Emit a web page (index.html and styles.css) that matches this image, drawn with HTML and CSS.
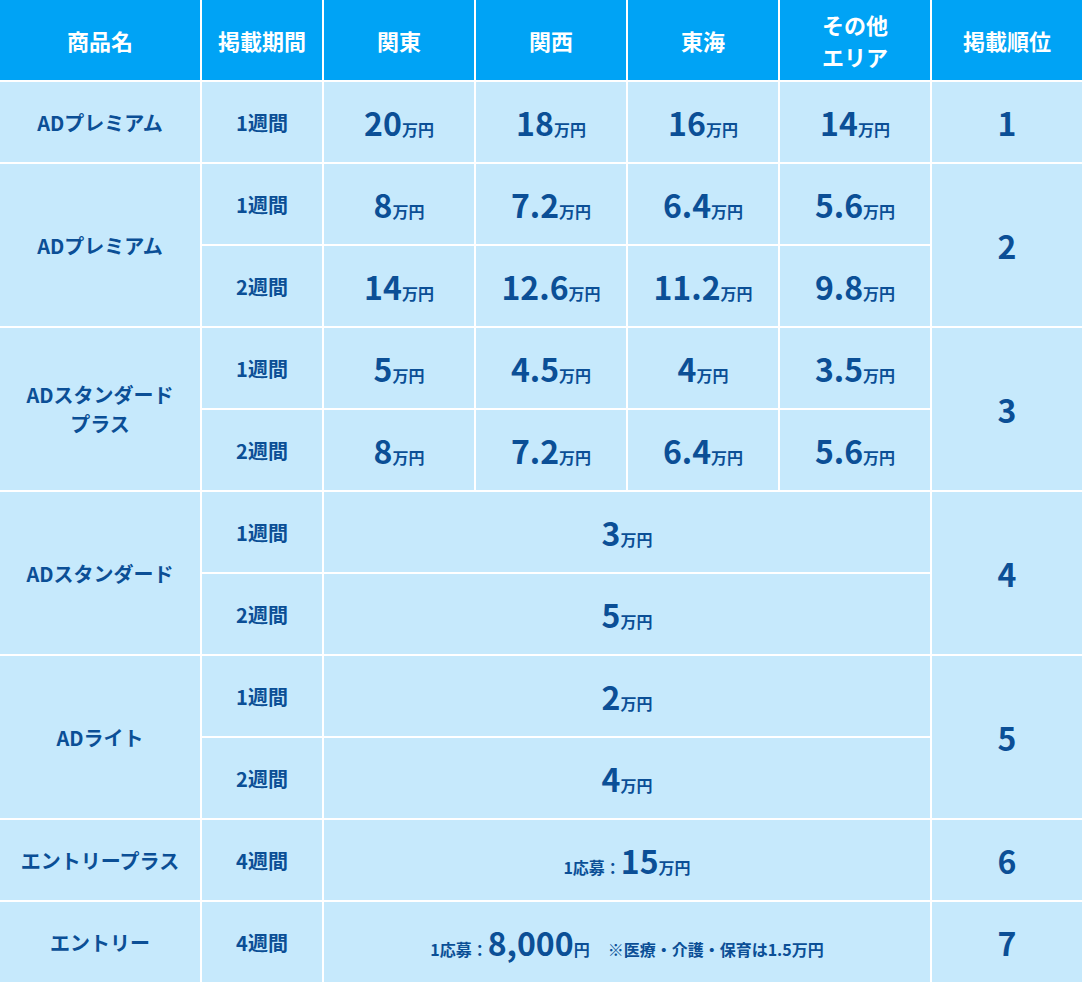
FILE: index.html
```html
<!DOCTYPE html>
<html lang="ja">
<head>
<meta charset="utf-8">
<link rel="stylesheet" href="styles.css">
</head>
<body>
<div class="table">
  <div class="th">商品名</div>
  <div class="th">掲載期間</div>
  <div class="th">関東</div>
  <div class="th">関西</div>
  <div class="th">東海</div>
  <div class="th">その他<br>エリア</div>
  <div class="th">掲載順位</div>

  <div class="td name">ADプレミアム</div>
  <div class="td period">1週間</div>
  <div class="td price"><span class="val"><span class="num">20</span><span class="unit">万円</span></span></div>
  <div class="td price"><span class="val"><span class="num">18</span><span class="unit">万円</span></span></div>
  <div class="td price"><span class="val"><span class="num">16</span><span class="unit">万円</span></span></div>
  <div class="td price"><span class="val"><span class="num">14</span><span class="unit">万円</span></span></div>
  <div class="td rank">1</div>

  <div class="td name span2">ADプレミアム</div>
  <div class="td period">1週間</div>
  <div class="td price"><span class="val"><span class="num">8</span><span class="unit">万円</span></span></div>
  <div class="td price"><span class="val"><span class="num">7.2</span><span class="unit">万円</span></span></div>
  <div class="td price"><span class="val"><span class="num">6.4</span><span class="unit">万円</span></span></div>
  <div class="td price"><span class="val"><span class="num">5.6</span><span class="unit">万円</span></span></div>
  <div class="td rank span2">2</div>
  <div class="td period">2週間</div>
  <div class="td price"><span class="val"><span class="num">14</span><span class="unit">万円</span></span></div>
  <div class="td price"><span class="val"><span class="num">12.6</span><span class="unit">万円</span></span></div>
  <div class="td price"><span class="val"><span class="num">11.2</span><span class="unit">万円</span></span></div>
  <div class="td price"><span class="val"><span class="num">9.8</span><span class="unit">万円</span></span></div>

  <div class="td name span2">ADスタンダード<br>プラス</div>
  <div class="td period">1週間</div>
  <div class="td price"><span class="val"><span class="num">5</span><span class="unit">万円</span></span></div>
  <div class="td price"><span class="val"><span class="num">4.5</span><span class="unit">万円</span></span></div>
  <div class="td price"><span class="val"><span class="num">4</span><span class="unit">万円</span></span></div>
  <div class="td price"><span class="val"><span class="num">3.5</span><span class="unit">万円</span></span></div>
  <div class="td rank span2">3</div>
  <div class="td period">2週間</div>
  <div class="td price"><span class="val"><span class="num">8</span><span class="unit">万円</span></span></div>
  <div class="td price"><span class="val"><span class="num">7.2</span><span class="unit">万円</span></span></div>
  <div class="td price"><span class="val"><span class="num">6.4</span><span class="unit">万円</span></span></div>
  <div class="td price"><span class="val"><span class="num">5.6</span><span class="unit">万円</span></span></div>

  <div class="td name span2">ADスタンダード</div>
  <div class="td period">1週間</div>
  <div class="td price wide"><span class="val"><span class="num">3</span><span class="unit">万円</span></span></div>
  <div class="td rank span2">4</div>
  <div class="td period">2週間</div>
  <div class="td price wide"><span class="val"><span class="num">5</span><span class="unit">万円</span></span></div>

  <div class="td name span2">ADライト</div>
  <div class="td period">1週間</div>
  <div class="td price wide"><span class="val"><span class="num">2</span><span class="unit">万円</span></span></div>
  <div class="td rank span2">5</div>
  <div class="td period">2週間</div>
  <div class="td price wide"><span class="val"><span class="num">4</span><span class="unit">万円</span></span></div>

  <div class="td name">エントリープラス</div>
  <div class="td period">4週間</div>
  <div class="td price wide"><span class="val"><span class="pre">1応募：</span><span class="num">15</span><span class="unit">万円</span></span></div>
  <div class="td rank">6</div>

  <div class="td name">エントリー</div>
  <div class="td period">4週間</div>
  <div class="td price wide"><span class="val"><span class="pre">1応募：</span><span class="num">8,000</span><span class="unit">円</span><span class="note">※医療・介護・保育は1.5万円</span></span></div>
  <div class="td rank">7</div>
</div>
</body>
</html>
```

FILE: styles.css
```css
html, body {
  margin: 0;
  padding: 0;
  background: #ffffff;
}

body {
  font-family: "Noto Sans CJK JP", "Noto Sans", sans-serif;
  font-weight: 700;
}

.table {
  display: grid;
  grid-template-columns: 200px 120px repeat(5, 150px);
  grid-auto-rows: 80px;
  gap: 2px;
  width: 1082px;
  background: #ffffff;
}

.th {
  background: #00a3f5;
  color: #ffffff;
  font-size: 22px;
  line-height: 32px;
  display: flex;
  align-items: center;
  justify-content: center;
  text-align: center;
}

.td {
  background: #c6e9fc;
  color: #0b4f96;
  display: flex;
  align-items: center;
  justify-content: center;
  text-align: center;
}

.span2 {
  grid-row: span 2;
}

.wide {
  grid-column: span 4;
}

.name {
  font-size: 20px;
  line-height: 29px;
}

.period {
  font-size: 20px;
}

.val {
  line-height: 1;
  white-space: nowrap;
}

.num {
  font-size: 32px;
}

.unit {
  font-size: 16px;
}

.pre {
  font-size: 16px;
}

.note {
  font-size: 16px;
  margin-left: 18px;
}

.rank {
  font-size: 32px;
}
```
